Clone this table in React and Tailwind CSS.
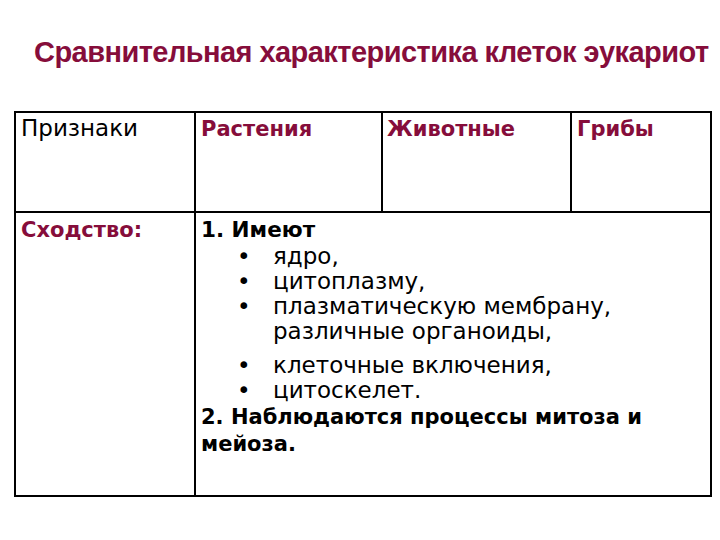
const maroon = "text-[#860d3b]";

export default function App() {
  return (
    <div className="w-[720px] h-[540px] bg-white overflow-hidden">
      {/* Заголовок */}
      <h1
        className={`pt-[35px] pl-[34px] h-[111px] text-[29px] leading-[34px] font-bold ${maroon} tracking-[-0.55px] whitespace-nowrap`}
        style={{ fontFamily: '"Liberation Sans", Arial, sans-serif' }}
      >
        Сравнительная характеристика клеток эукариот
      </h1>

      <table
        className="ml-[14px] border-collapse table-fixed"
        style={{ fontFamily: '"DejaVu Sans", Verdana, sans-serif' }}
      >
        <colgroup>
          <col className="w-[180px]" />
          <col className="w-[187px]" />
          <col className="w-[189px]" />
          <col className="w-[140px]" />
        </colgroup>
        <tbody>
          <tr className="h-[100px]">
            <td className="border-2 border-black align-top px-[5px] pt-[1px] text-[23px] leading-[28px] text-black">
              Признаки
            </td>
            <td className={`border-2 border-black align-top px-[5px] pt-[2px] text-[21px] leading-[28px] font-bold ${maroon}`}>
              Растения
            </td>
            <td className={`border-2 border-black align-top px-[4px] pt-[2px] text-[21px] leading-[28px] font-bold ${maroon}`}>
              Животные
            </td>
            <td className={`border-2 border-black align-top px-[5px] pt-[2px] text-[21px] leading-[28px] font-bold ${maroon}`}>
              Грибы
            </td>
          </tr>
          <tr className="h-[284px]">
            <td className={`border-2 border-black align-top px-[5px] pt-[3px] text-[21px] leading-[28px] font-bold ${maroon}`}>
              Сходство:
            </td>
            <td colSpan={3} className="border-2 border-black align-top pl-[5px] pr-[6px] pt-[3px] text-black whitespace-nowrap">
              <div className="text-[21.5px] leading-[28px] font-bold">1. Имеют</div>
              <ul className="text-[23px] leading-[25px]">
                <li className="flex">
                  <span className="w-[72px] shrink-0 pl-[36px]">•</span>
                  <span>ядро,</span>
                </li>
                <li className="flex">
                  <span className="w-[72px] shrink-0 pl-[36px]">•</span>
                  <span>цитоплазму,</span>
                </li>
                <li className="flex">
                  <span className="w-[72px] shrink-0 pl-[36px]">•</span>
                  <span>
                    плазматическую мембрану,
                    <br />
                    различные органоиды,
                  </span>
                </li>
                <li className="flex mt-[9px]">
                  <span className="w-[72px] shrink-0 pl-[36px]">•</span>
                  <span>клеточные включения,</span>
                </li>
                <li className="flex">
                  <span className="w-[72px] shrink-0 pl-[36px]">•</span>
                  <span>цитоскелет.</span>
                </li>
              </ul>
              <div className="text-[21px] leading-[27px] font-bold mt-[1px]">
                2. Наблюдаются процессы митоза и
                <br />
                мейоза.
              </div>
            </td>
          </tr>
        </tbody>
      </table>
    </div>
  );
}
